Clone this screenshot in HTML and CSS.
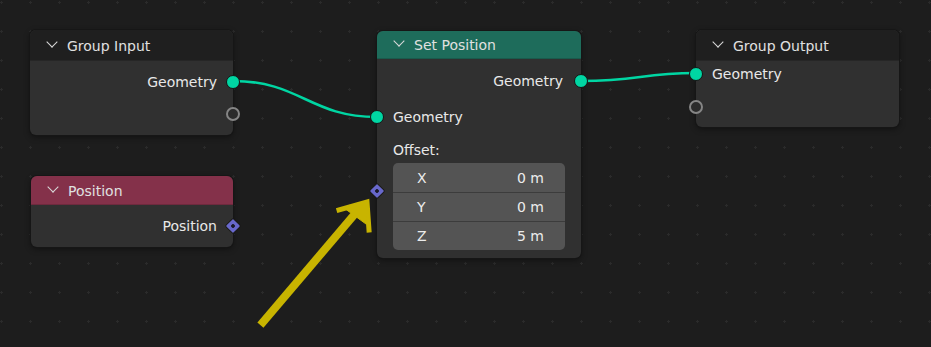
FILE: index.html
```html
<!doctype html>
<html lang="en">
	<head>
		<meta charset="UTF-8" />
		<meta name="viewport" content="width=device-width, initial-scale=1.0" />
		<title>geometry nodes</title>
		<link rel="stylesheet" href="styles.css">
	</head>

	<body>
		<main class="editor">
			<svg class="links" width="931" height="347">
				<path d="M233 81 C 300 81, 310 117, 377 117" />
				<path d="M581 81 C 640 81, 640 73, 696 73" />
			</svg>

			<section class="node groupInput">
				<header><span class="chevron"></span>Group Input</header>
				<div class="body">
					<div class="row out">Geometry<span class="socket geo"></span></div>
					<div class="row out"><span class="socket empty"></span></div>
				</div>
			</section>

			<section class="node position">
				<header><span class="chevron"></span>Position</header>
				<div class="body">
					<div class="row out">Position<span class="socket vec"></span></div>
				</div>
			</section>

			<section class="node setPosition">
				<header><span class="chevron"></span>Set Position</header>
				<div class="body">
					<div class="row out">Geometry<span class="socket geo"></span></div>
					<div class="row in"><span class="socket geo"></span>Geometry</div>
					<div class="row label">Offset:</div>
					<div class="vector">
						<span class="socket vec"></span>
						<div class="field"><span>X</span><span>0 m</span></div>
						<div class="field"><span>Y</span><span>0 m</span></div>
						<div class="field"><span>Z</span><span>5 m</span></div>
					</div>
				</div>
			</section>

			<section class="node groupOutput">
				<header><span class="chevron"></span>Group Output</header>
				<div class="body">
					<div class="row in"><span class="socket geo"></span>Geometry</div>
					<div class="row in"><span class="socket empty"></span></div>
				</div>
			</section>

			<svg class="arrow" width="931" height="347">
				<line x1="263" y1="322" x2="360" y2="208" />
				<polyline points="339,210 367,202 369,230" />
				<polygon points="368,201 344,208 366,224" />
			</svg>
		</main>
	</body>
</html>
```

FILE: styles.css
```css
*,
*::before,
*::after {
	box-sizing: border-box;
	margin: 0;
	padding: 0;
}

body {
	width: 931px;
	height: 347px;
	overflow: hidden;
	background-color: #1d1d1d;
	font-family: 'DejaVu Sans', sans-serif;
	font-size: 14px;
	color: #e8e8e8;
}

.editor {
	position: relative;
	width: 931px;
	height: 347px;
	background-image: radial-gradient(circle, #2b2b2b 1px, transparent 1.4px);
	background-size: 29px 29px;
	background-position: -13px -12px;
}

.links,
.arrow {
	position: absolute;
	left: 0;
	top: 0;
}

.links path {
	fill: none;
	stroke: #00d6a3;
	stroke-width: 2.5;
}

.arrow {
	stroke: #c8b400;
	fill: #c8b400;
	stroke-linecap: square;

	line {
		stroke-width: 8;
	}

	polyline {
		fill: none;
		stroke-width: 5;
	}
}

.node {
	position: absolute;
	display: flex;
	flex-direction: column;
	background: #303030;
	border-radius: 6px;
	box-shadow: 0 0 0 1px #161616, 0 2px 6px rgba(0, 0, 0, 0.45);

	header {
		display: flex;
		align-items: center;
		gap: 8px;
		height: 31px;
		padding-left: 15px;
		padding-top: 1px;
		border-radius: 6px 6px 0 0;
		background: #1f1f1f;
		color: #e0e0e0;
		border-bottom: 1px solid #262626;
	}

	.body {
		display: flex;
		flex-direction: column;
		padding: 9px 16px 9px;
		gap: 8px;
	}
}

.chevron {
	width: 14px;
	height: 8px;
	position: relative;

	&::before {
		content: '';
		position: absolute;
		left: 3px;
		top: -4px;
		width: 8px;
		height: 8px;
		border-right: 1.5px solid #dadada;
		border-bottom: 1.5px solid #dadada;
		transform: rotate(45deg);
	}
}

.groupInput {
	left: 30px;
	top: 30px;
	width: 203px;
	height: 105px;
}

.position {
	left: 31px;
	top: 176px;
	width: 202px;
	height: 71px;

	header {
		height: 29px;
		background: #84314a;
		border-bottom-color: #6e2a3e;
	}

	.body {
		padding-top: 9px;
	}
}

.setPosition {
	left: 377px;
	top: 31px;
	width: 204px;
	height: 227px;

	header {
		height: 29px;
		background: #1e6c5b;
		border-bottom-color: #1a5a4c;
	}

	.body {
		padding: 10px 16px 8px;
		gap: 0;
	}

	.row.out {
		padding-right: 2px;
	}

	.row.in {
		margin-top: 12px;
	}

	.row.label {
		margin-top: 9px;
	}

	.vector {
		margin-top: 1px;
	}
}

.groupOutput {
	left: 696px;
	top: 30px;
	width: 203px;
	height: 97px;

	.body {
		padding: 1px 16px 8px;
		gap: 9px;
	}
}

.row {
	position: relative;
	display: flex;
	align-items: center;
	height: 24px;
	white-space: nowrap;

	&.out {
		justify-content: flex-end;
	}
}

.socket {
	position: absolute;
	top: 50%;
	width: 14px;
	height: 14px;
	border-radius: 50%;
	border: 1px solid #151515;
	transform: translate(-50%, -50%);

	.out & {
		left: calc(100% + 16px);
	}

	.in & {
		left: -16px;
	}

	&.geo {
		background: #00d6a3;
	}

	&.empty {
		background: #2b2b2b;
		border: 2px solid #858585;
	}

	&.vec {
		width: 10px;
		height: 10px;
		border: none;
		border-radius: 1px;
		background: radial-gradient(circle closest-side, #1a1a2a 1.5px, #6868cc 2.2px);
		box-shadow: 0 0 0 1px #1a1a1a;
		transform: translate(-50%, -50%) rotate(45deg);
	}
}

.vector {
	position: relative;
	display: flex;
	flex-direction: column;
	background: #545454;
	border-radius: 5px;

	.socket.vec {
		left: -16px;
		top: 28px;
	}
}

.field {
	display: flex;
	justify-content: space-between;
	align-items: center;
	height: 29px;
	padding: 0 21px 0 24px;
	color: #ececec;

	& + & {
		border-top: 1px solid #3c3c3c;
	}
}
```
